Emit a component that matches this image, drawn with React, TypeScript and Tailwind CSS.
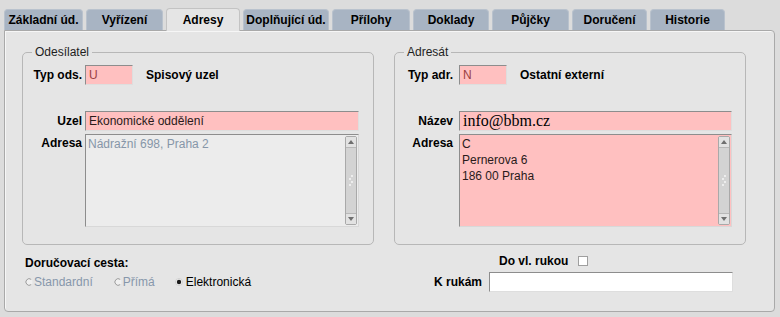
import React from 'react';

const tabs = [
  { label: 'Základní úd.', w: 79 },
  { label: 'Vyřízení', w: 77 },
  { label: 'Adresy', w: 74, active: true },
  { label: 'Doplňující úd.', w: 86 },
  { label: 'Přílohy', w: 78 },
  { label: 'Doklady', w: 76 },
  { label: 'Půjčky', w: 77 },
  { label: 'Doručení', w: 75 },
  { label: 'Historie', w: 75 },
];

const inputCls =
  'h-[20px] border border-t-[#8d8d8d] border-l-[#8d8d8d] border-r-[#dedede] border-b-[#dedede] px-[3px] leading-[18px] whitespace-nowrap overflow-hidden';

const Scrollbar = () => (
  <div className="w-[12px] my-[1px] mr-[1px] flex flex-col border border-[#a9a9a9] rounded-[2px] bg-[#d3d3d3]">
    <div className="h-[11px] flex items-center justify-center border-b border-[#b8b8b8] bg-[#e2e2e2]">
      <svg width="6" height="4" viewBox="0 0 6 4">
        <path d="M0 4 L3 0 L6 4 Z" fill="#6f6f6f" />
      </svg>
    </div>
    <div className="flex-1 flex items-center justify-center">
      <svg width="6" height="14" viewBox="0 0 6 14">
        <circle cx="4" cy="2" r="0.9" fill="#fafafa" />
        <circle cx="2" cy="5" r="0.9" fill="#fafafa" />
        <circle cx="4" cy="8" r="0.9" fill="#fafafa" />
        <circle cx="2" cy="11" r="0.9" fill="#fafafa" />
      </svg>
    </div>
    <div className="h-[11px] flex items-center justify-center border-t border-[#b8b8b8] bg-[#e2e2e2]">
      <svg width="6" height="4" viewBox="0 0 6 4">
        <path d="M0 0 L3 4 L6 0 Z" fill="#6f6f6f" />
      </svg>
    </div>
  </div>
);

const Radio = ({ checked }: { checked?: boolean }) => (
  <svg width="8" height="8" viewBox="0 0 8 8" className="shrink-0">
    {checked ? (
      <>
        <circle cx="4" cy="4" r="3.5" fill="#f4f4f4" stroke="#d0d0d0" strokeWidth="1" />
        <circle cx="4" cy="4" r="2.2" fill="#1a1a1a" />
      </>
    ) : (
      <>
        <circle cx="4" cy="4" r="3.5" fill="#f0f0f0" />
        <path d="M6.2 1.4 A3.3 3.3 0 1 0 6.2 6.6" fill="none" stroke="#9a9a9a" strokeWidth="1" />
      </>
    )}
  </svg>
);

const Fieldset = ({
  legend,
  labelW,
  gap,
  typLabel,
  typValue,
  typText,
  nameLabel,
  nameValue,
  serifName,
  addrLines,
  addrDisabled,
  inputW,
}: {
  legend: string;
  labelW: number;
  gap: number;
  typLabel: string;
  typValue: string;
  typText: string;
  nameLabel: string;
  nameValue: string;
  serifName?: boolean;
  addrLines: string[];
  addrDisabled?: boolean;
  inputW: number;
}) => (
  <fieldset className="w-[352px] h-[200px] border border-[#b7b7b7] rounded-[5px] m-0 p-0">
    <legend className="ml-[9px] px-[3px] leading-[14px] text-[12px] text-[#1e1e1e]">{legend}</legend>
    <div className="mt-[6px] flex flex-col">
      <div className="flex items-center h-[20px]">
        <div className="font-bold text-right shrink-0" style={{ width: labelW, marginRight: gap }}>
          {typLabel}
        </div>
        <div className={`${inputCls} w-[48px] bg-[#ffc0c0] text-[#9a3f3f]`}>{typValue}</div>
        <div className="ml-[13px] font-bold">{typText}</div>
      </div>
      <div className="flex items-center h-[20px] mt-[26px]">
        <div className="font-bold text-right shrink-0" style={{ width: labelW, marginRight: gap }}>
          {nameLabel}
        </div>
        <div
          className={`${inputCls} bg-[#ffc0c0] ${
            serifName
              ? "font-['Liberation_Serif',serif] text-[16px] text-black"
              : 'text-[#2a1a1a]'
          }`}
          style={{ width: inputW }}
        >
          {nameValue}
        </div>
      </div>
      <div className="flex items-start mt-[3px]">
        <div
          className="font-bold text-right shrink-0 leading-[16px] pt-[1px]"
          style={{ width: labelW, marginRight: gap }}
        >
          Adresa
        </div>
        <div
          className={`h-[93px] flex border border-t-[#8d8d8d] border-l-[#8d8d8d] border-r-[#d8d8d8] border-b-[#d8d8d8] ${
            addrDisabled ? 'bg-[#ececec]' : 'bg-[#ffc0c0]'
          }`}
          style={{ width: inputW }}
        >
          <div
            className={`flex-1 px-[2px] pt-[1px] leading-[16px] ${
              addrDisabled ? 'text-[#8696a8]' : 'text-[#2a1a1a]'
            }`}
          >
            {addrLines.map((l) => (
              <div key={l}>{l}</div>
            ))}
          </div>
          <Scrollbar />
        </div>
      </div>
    </div>
  </fieldset>
);

export default function App() {
  return (
    <div className="w-[780px] h-[317px] bg-[#dcdcdc] pt-[8px] pl-[4px] overflow-hidden font-['Liberation_Sans',Arial,sans-serif] text-[12px] text-black">
      {/* Tabs */}
      <div className="flex items-end gap-[3px] h-[22px]">
        {tabs.map((t) =>
          t.active ? (
            <div
              key={t.label}
              className="relative z-10 -mb-px h-[23px] bg-[#e5e5e5] border border-b-0 border-[#c3c3c3] rounded-t-[4px] flex items-center justify-center font-bold"
              style={{ width: t.w }}
            >
              {t.label}
            </div>
          ) : (
            <div
              key={t.label}
              className="h-[21px] bg-[#a8b4c3] border border-b-0 border-[#b9c2cd] rounded-t-[4px] flex items-center justify-center font-bold"
              style={{ width: t.w }}
            >
              {t.label}
            </div>
          )
        )}
      </div>

      {/* Panel */}
      <div className="w-[771px] h-[282px] bg-[#e5e5e5] border border-[#a9a9a9] rounded-b-[4px] rounded-tr-[4px] shadow-[inset_1px_1px_0_#f6f6f6] pt-[14px] px-[17px]">
        <div className="flex gap-[20px]">
          <Fieldset
            legend="Odesílatel"
            labelW={59}
            gap={3}
            typLabel="Typ ods."
            typValue="U"
            typText="Spisový uzel"
            nameLabel="Uzel"
            nameValue="Ekonomické oddělení"
            addrLines={['Nádražní 698, Praha 2']}
            addrDisabled
            inputW={274}
          />
          <Fieldset
            legend="Adresát"
            labelW={58}
            gap={6}
            typLabel="Typ adr."
            typValue="N"
            typText="Ostatní externí"
            nameLabel="Název"
            nameValue="info@bbm.cz"
            serifName
            addrLines={['C', 'Pernerova 6', '186 00 Praha']}
            inputW={273}
          />
        </div>

        {/* Bottom */}
        <div className="flex">
          <div className="w-[412px] pl-[3px] pt-[11px]">
            <div className="font-bold leading-[14px]">Doručovací cesta:</div>
            <div className="flex items-center mt-[5px] leading-[14px]">
              <Radio />
              <span className="ml-[1px] text-[#8797ab]">Standardní</span>
              <span className="ml-[21px] flex">
                <Radio />
              </span>
              <span className="ml-[1px] text-[#8797ab]">Přímá</span>
              <span className="ml-[20px] flex">
                <Radio checked />
              </span>
              <span className="ml-[3px]">Elektronická</span>
            </div>
          </div>
          <div className="w-[300px] pt-[9px]">
            <div className="flex items-center h-[14px] pl-[65px]">
              <span className="font-bold">Do vl. rukou</span>
              <span className="ml-[10px] w-[10px] h-[10px] bg-white border border-[#9f9f9f]" />
            </div>
            <div className="flex items-center mt-[4px]">
              <span className="font-bold">K rukám</span>
              <div className={`${inputCls} ml-[7px] w-[244px] bg-white`} />
            </div>
          </div>
        </div>
      </div>
    </div>
  );
}
